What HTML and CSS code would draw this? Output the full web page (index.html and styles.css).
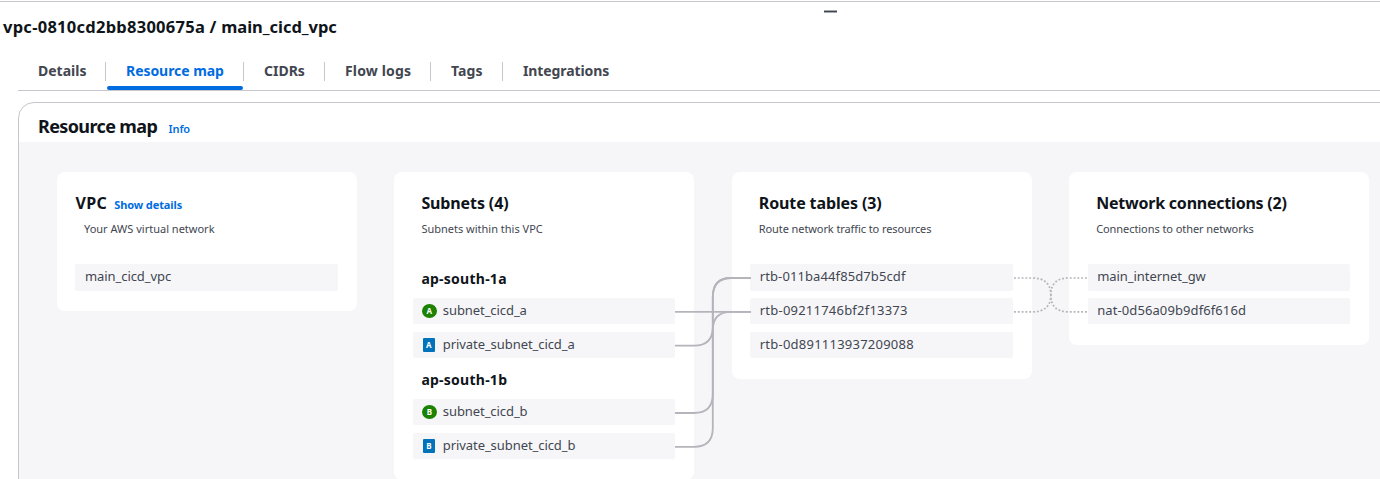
FILE: index.html
```html
<!DOCTYPE html>
<html lang="en">
<head>
<meta charset="utf-8">
<title>Resource map</title>
<link rel="stylesheet" href="styles.css">
</head>
<body>
<section class="panel">
  <div class="handle"></div>
  <h1 class="title">vpc-0810cd2bb8300675a / <span>main_cicd_vpc</span></h1>
  <nav class="tabs">
    <a class="tab t-details"><span>Details</span></a>
    <a class="tab t-map active"><span>Resource map</span></a>
    <a class="tab t-cidrs"><span>CIDRs</span></a>
    <a class="tab t-flow"><span>Flow logs</span></a>
    <a class="tab t-tags"><span>Tags</span></a>
    <a class="tab t-int"><span>Integrations</span></a>
  </nav>
  <div class="container">
    <header class="container-head"><h2>Resource map</h2><a class="info">Info</a></header>
    <div class="board">
      <article class="card vpc">
        <div class="card-title"><h3>VPC</h3><a class="show">Show details</a></div>
        <p class="desc">Your AWS virtual network</p>
        <div class="item"><span>main_cicd_vpc</span></div>
      </article>
      <article class="card subnets">
        <div class="card-title"><h3>Subnets (4)</h3></div>
        <p class="desc">Subnets within this VPC</p>
        <h4 class="zone">ap-south-1a</h4>
        <div class="item"><i class="badge public">A</i><span>subnet_cicd_a</span></div>
        <div class="item"><i class="badge private">A</i><span>private_subnet_cicd_a</span></div>
        <h4 class="zone second">ap-south-1b</h4>
        <div class="item"><i class="badge public">B</i><span>subnet_cicd_b</span></div>
        <div class="item"><i class="badge private">B</i><span>private_subnet_cicd_b</span></div>
      </article>
      <article class="card routes">
        <div class="card-title"><h3>Route tables (3)</h3></div>
        <p class="desc">Route network traffic to resources</p>
        <div class="item"><span class="r1">rtb-011ba44f85d7b5cdf</span></div>
        <div class="item"><span class="r2">rtb-09211746bf2f13373</span></div>
        <div class="item"><span class="r3">rtb-0d891113937209088</span></div>
      </article>
      <article class="card network">
        <div class="card-title"><h3>Network connections (2)</h3></div>
        <p class="desc">Connections to other networks</p>
        <div class="item"><span class="n1">main_internet_gw</span></div>
        <div class="item"><span class="n2">nat-0d56a09b9df6f616d</span></div>
      </article>
      <svg class="links" width="1361" height="337" viewBox="19 142 1361 337">
        <g class="solid">
          <path d="M675 311.9H751"/>
          <path d="M675 345.7H694Q712.8 345.7 712.8 327V297Q712.8 278 731 278H751"/>
          <path d="M675 413H694Q712.8 413 712.8 394V330Q712.8 311.9 731 311.9H751"/>
          <path d="M675 446.8H694Q712.8 446.8 712.8 428V297Q712.8 278 731 278H751"/>
        </g>
        <g class="dotted">
          <path d="M1014 278H1032Q1050.8 278 1050.8 295Q1050.8 311.9 1069 311.9H1088"/>
          <path d="M1014 311.9H1032Q1050.8 311.9 1050.8 295Q1050.8 278 1069 278H1088"/>
        </g>
      </svg>
    </div>
  </div>
</section>
</body>
</html>
```
FILE: styles.css
```css
* { box-sizing: border-box; }
body {
  margin: 0;
  height: 479px;
  overflow: hidden;
  background: #fff;
  color: #0f141a;
  font-family: "Noto Sans", "Open Sans", sans-serif;
}
h1, h2, h3, h4, p { margin: 0; white-space: nowrap; }
.panel { position: relative; margin-top: 1px; border-top: 1px solid #c6c6cd; }
.handle {
  position: absolute;
  left: 824px;
  top: 8px;
  width: 13px;
  height: 3px;
  background: #424650;
  border: solid #a5a8ac;
  border-width: 1px 0;
}
.title { height: 50px; padding-left: 3px; font-size: 16.5px; line-height: 50px; font-weight: 700; letter-spacing: 0.26px; }
.title span { letter-spacing: -0.03px; }
.tabs {
  display: flex;
  height: 39px;
  margin-left: 18px;
  border-bottom: 1px solid #c6c6cd;
  color: #424650;
  font-size: 14px;
  font-weight: 700;
}
.tab {
  position: relative;
  height: 39px;
  padding: 10px 0 0 20px;
  white-space: nowrap;
}
.tab span { display: block; height: 19px; line-height: 18px; border-right: 1px solid #c6c6cd; }
.tab:last-child span { border: 0; }
.t-details { width: 88px; }
.t-map { width: 138px; letter-spacing: -0.05px; }
.t-cidrs { width: 81px; letter-spacing: 0; }
.t-flow { width: 106px; letter-spacing: 0.15px; }
.t-tags { width: 72px; letter-spacing: 0.1px; }
.t-int { width: 120px; letter-spacing: -0.1px; }
.active { color: #006ce0; }
.active::after {
  content: "";
  position: absolute;
  left: 1px;
  width: 136px;
  bottom: 1px;
  height: 4px;
  background: #006ce0;
  border-radius: 2px;
}
.container {
  width: 1400px;
  height: 400px;
  margin: 11px 0 0 18px;
  border: 1px solid #c6c6cd;
  border-radius: 16px;
  overflow: hidden;
}
.container-head { display: flex; align-items: baseline; gap: 12px; height: 39px; padding-left: 19px; }
.container-head h2 { width: 118.5px; font-size: 18px; line-height: 47px; font-weight: 700; letter-spacing: -0.62px; }
.info, .show { color: #006ce0; font-size: 11px; font-weight: 600; white-space: nowrap; }
.info { letter-spacing: -0.1px; }
.show { font-weight: 700; letter-spacing: -0.1px; }
.board {
  position: relative;
  display: flex;
  align-items: flex-start;
  gap: 37.4px;
  height: 360px;
  padding: 30px 0 0 38px;
  background: #f6f6f9;
}
.card {
  flex: none;
  width: 300px;
  padding: 18px 19px 20.6px 18.4px;
  background: #fff;
  border-radius: 8px;
}
.card-title { display: flex; align-items: baseline; gap: 7px; height: 27px; padding-left: 8.6px; }
.card-title h3 { font-size: 16px; line-height: 26px; font-weight: 700; letter-spacing: -0.12px; }
.network .card-title h3 { letter-spacing: -0.22px; }
.vpc .card-title { padding-left: 0; }
.vpc .card-title h3 { letter-spacing: 0.4px; }
.desc { height: 47.3px; padding: 3px 0 0 8.6px; color: #424650; font-size: 11px; line-height: 18px; }
.routes .desc { letter-spacing: -0.09px; }
.network .desc { letter-spacing: -0.07px; }
.item {
  display: flex;
  align-items: center;
  height: 26.4px;
  padding-left: 9.6px;
  background: #f6f6f9;
  border-radius: 2px;
  color: #424650;
  font-size: 13px;
  line-height: 24px;
  white-space: nowrap;
}
.item span { position: relative; top: -1.2px; letter-spacing: -0.07px; }
.item .r1 { letter-spacing: 0.1px; }
.item .r2 { letter-spacing: 0.22px; }
.item .r3 { letter-spacing: 0.23px; }
.item .n1 { letter-spacing: -0.05px; }
.item .n2 { letter-spacing: 0.1px; }
.item + .item { margin-top: 7.3px; }
.zone { height: 33.7px; padding-left: 8.6px; font-size: 14px; line-height: 29px; font-weight: 700; letter-spacing: 0.25px; }
.zone.second { margin-top: 7.2px; }
.badge {
  width: 15px;
  height: 14px;
  margin: 0 5.9px 0 -0.5px;
  color: #fff;
  font: bold 8px/14px "Noto Sans", sans-serif;
  text-align: center;
}
.public { background: #1d8102; border-radius: 50%; }
.private { width: 12px; margin: 0 7.9px 0 0.5px; background: #0073bb; border-radius: 1px; }
.links { position: absolute; left: 0; top: 0; fill: none; stroke: #b4b4bb; }
.solid { stroke-width: 1.8; }
.dotted { stroke-width: 1.7; stroke-dasharray: 1.9 1.9; }
```
